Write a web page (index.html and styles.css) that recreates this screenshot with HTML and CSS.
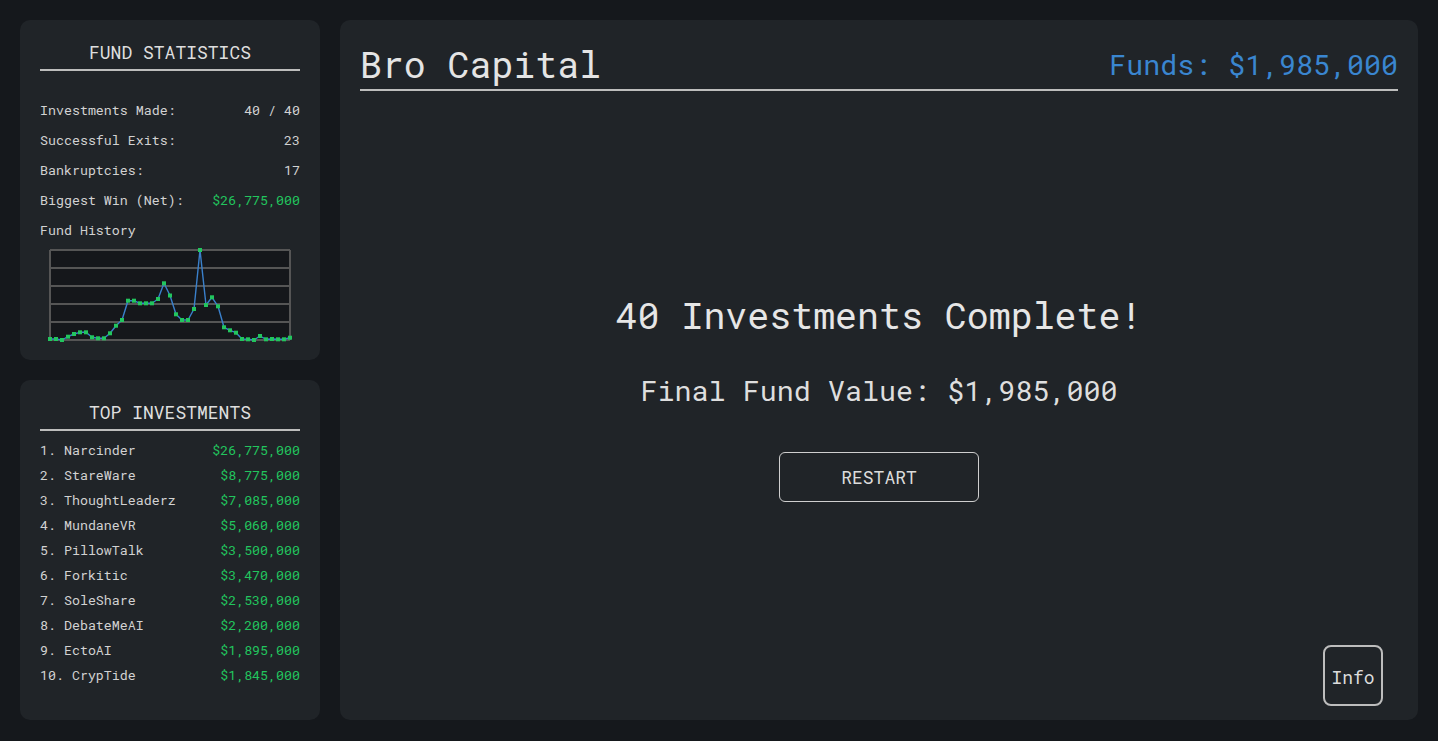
FILE: index.html
```html
<!DOCTYPE html>
<html lang="en">
<head>
<meta charset="utf-8">
<title>Bro Capital</title>
<link rel="stylesheet" href="styles.css">
</head>
<body>
<div class="app">
  <aside class="sidebar">
    <section class="panel stats">
      <h2 class="panel-title">FUND STATISTICS</h2>
      <div class="stat-list">
        <div class="row"><span>Investments Made:</span><span>40 / 40</span></div>
        <div class="row"><span>Successful Exits:</span><span>23</span></div>
        <div class="row"><span>Bankruptcies:</span><span>17</span></div>
        <div class="row"><span>Biggest Win (Net):</span><span class="green">$26,775,000</span></div>
        <div class="row"><span>Fund History</span></div>
      </div>
      <div class="chart">
        <svg width="240" height="90" viewBox="0 0 240 90">
          <rect x="0" y="0" width="240" height="90" fill="#15171b"/>
          <g stroke="#555" stroke-width="2">
            <line x1="0" y1="0" x2="240" y2="0"/>
            <line x1="0" y1="18" x2="240" y2="18"/>
            <line x1="0" y1="36" x2="240" y2="36"/>
            <line x1="0" y1="54" x2="240" y2="54"/>
            <line x1="0" y1="72" x2="240" y2="72"/>
            <line x1="0" y1="90" x2="240" y2="90"/>
            <line x1="0" y1="0" x2="0" y2="90"/>
            <line x1="240" y1="0" x2="240" y2="90"/>
          </g>
          <polyline fill="none" stroke="#3a80cc" stroke-width="1.4" stroke-linejoin="round"
            points="0,89 6,89 12,90 18,86.7 24,84 30,82.3 36,82.3 42,87.3 48,88.3 54,88.3 60,83.3 66,75.7 72,70 78,50.7 84,50.7 90,53.3 96,53.3 102,53.3 108,49 114,33.3 120,45.5 126,64.3 132,70 138,70 144,59 150,0 156,55 162,47.3 168,56.3 174,77.3 180,80.3 186,82.7 192,89 198,89.3 204,90 210,86 216,89.3 222,89 228,89.3 234,89.3 240,87.7"/>
          <g fill="#22c55e" id="pts"></g>
        </svg>
      </div>
    </section>
    <section class="panel top">
      <h2 class="panel-title">TOP INVESTMENTS</h2>
      <div class="top-list">
        <div class="row"><span>1. Narcinder</span><span class="green">$26,775,000</span></div>
        <div class="row"><span>2. StareWare</span><span class="green">$8,775,000</span></div>
        <div class="row"><span>3. ThoughtLeaderz</span><span class="green">$7,085,000</span></div>
        <div class="row"><span>4. MundaneVR</span><span class="green">$5,060,000</span></div>
        <div class="row"><span>5. PillowTalk</span><span class="green">$3,500,000</span></div>
        <div class="row"><span>6. Forkitic</span><span class="green">$3,470,000</span></div>
        <div class="row"><span>7. SoleShare</span><span class="green">$2,530,000</span></div>
        <div class="row"><span>8. DebateMeAI</span><span class="green">$2,200,000</span></div>
        <div class="row"><span>9. EctoAI</span><span class="green">$1,895,000</span></div>
        <div class="row"><span>10. CrypTide</span><span class="green">$1,845,000</span></div>
      </div>
    </section>
  </aside>
  <main class="panel main">
    <header class="header">
      <h1 class="brand">Bro Capital</h1>
      <div class="funds">Funds: $1,985,000</div>
    </header>
    <div class="center">
      <h2 class="done">40 Investments Complete!</h2>
      <p class="final">Final Fund Value: $1,985,000</p>
      <button class="restart">RESTART</button>
    </div>
    <button class="info">Info</button>
  </main>
</div>
<script>
  (function () {
    var ys = [89,89,90,86.7,84,82.3,82.3,87.3,88.3,88.3,83.3,75.7,70,50.7,50.7,53.3,53.3,53.3,49,33.3,45.5,64.3,70,70,59,0,55,47.3,56.3,77.3,80.3,82.7,89,89.3,90,86,89.3,89,89.3,89.3,87.7];
    var g = document.getElementById('pts');
    var ns = 'http://www.w3.org/2000/svg';
    ys.forEach(function (y, i) {
      var r = document.createElementNS(ns, 'rect');
      r.setAttribute('x', i * 6 - 2);
      r.setAttribute('y', y - 2);
      r.setAttribute('width', 4);
      r.setAttribute('height', 4);
      g.appendChild(r);
    });
  })();
</script>
</body>
</html>
```

FILE: styles.css
```css
* { box-sizing: border-box; }

html, body {
  margin: 0;
  background: #15181c;
}

body {
  padding: 20px 20px 21px 20px;
  height: 741px;
  font-family: "Roboto Mono", "Liberation Mono", "DejaVu Sans Mono", monospace;
  color: #d6d6d6;
  overflow: hidden;
}

.app {
  display: flex;
  gap: 20px;
  height: 700px;
}

.sidebar {
  width: 300px;
  flex: none;
  display: flex;
  flex-direction: column;
  gap: 20px;
}

.panel {
  background: #202428;
  border-radius: 10px;
  padding: 20px;
}

.sidebar .panel {
  flex: 1;
}

.panel-title {
  margin: 0;
  font-size: 18px;
  font-weight: 400;
  line-height: 24px;
  text-align: center;
  color: #dedede;
  padding-bottom: 5px;
  border-bottom: 2px solid #bdbdbd;
}

.row {
  display: flex;
  justify-content: space-between;
  font-size: 13.3px;
  color: #d2d2d2;
}

.stat-list {
  margin-top: 24px;
}

.stat-list .row {
  line-height: 30px;
  height: 30px;
}

.top-list {
  margin-top: 7px;
}

.top-list .row {
  line-height: 25px;
  height: 25px;
}

.green {
  color: #22c55e;
}

.chart {
  margin-top: 5px;
  display: flex;
  justify-content: center;
}

.chart svg {
  display: block;
  overflow: visible;
}

.main {
  flex: 1;
  position: relative;
  display: flex;
  flex-direction: column;
}

.header {
  display: flex;
  justify-content: space-between;
  align-items: center;
  height: 51px;
  border-bottom: 2px solid #bdbdbd;
}

.brand {
  margin: 0;
  font-size: 36.5px;
  font-weight: 400;
  line-height: 49px;
  color: #e4e4e4;
}

.funds {
  font-size: 28.3px;
  line-height: 49px;
  color: #3a86d0;
}

.center {
  flex: 1;
  display: flex;
  flex-direction: column;
  align-items: center;
  justify-content: center;
  padding-top: 3px;
}

.done {
  margin: 0;
  font-size: 36.6px;
  font-weight: 400;
  line-height: 44px;
  color: #e6e6e6;
}

.final {
  margin: 35px 0 44px;
  font-size: 28.4px;
  line-height: 36px;
  color: #dedede;
}

.restart {
  width: 200px;
  height: 50px;
  background: transparent;
  border: 1.5px solid #cfcfcf;
  border-radius: 6px;
  color: #dcdcdc;
  font-family: inherit;
  font-size: 18px;
  cursor: pointer;
}

.info {
  position: absolute;
  right: 35px;
  bottom: 14px;
  width: 60px;
  height: 61px;
  background: transparent;
  border: 2px solid #bdbdbd;
  border-radius: 8px;
  color: #dcdcdc;
  font-family: inherit;
  font-size: 18px;
  padding: 3px 0 0;
  cursor: pointer;
}
```
